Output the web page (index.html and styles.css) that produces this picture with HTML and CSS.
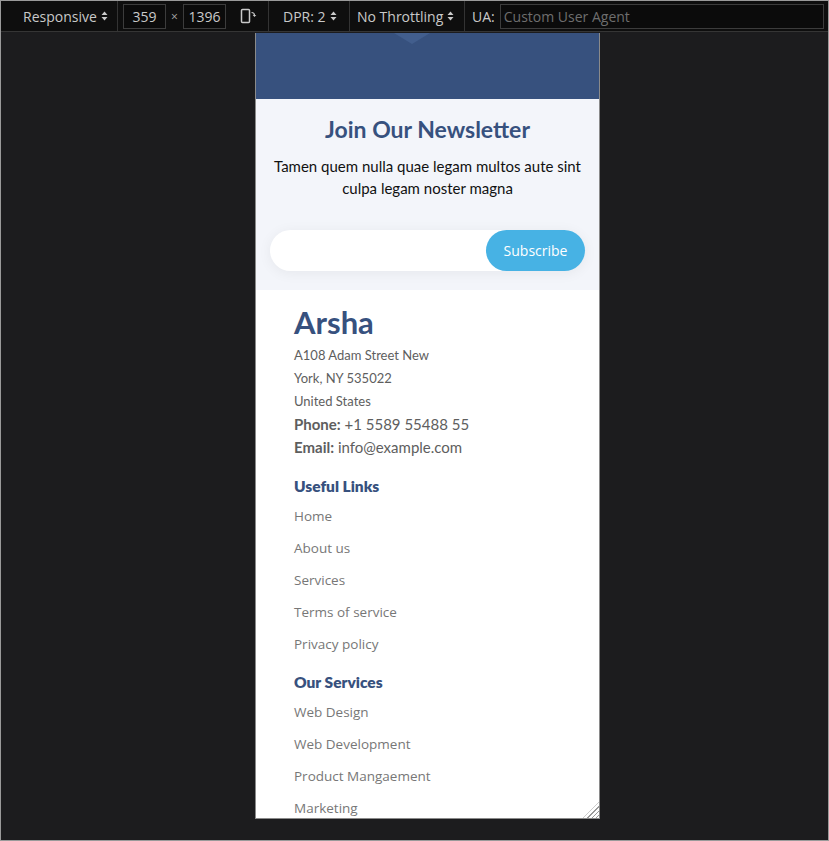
FILE: index.html
```html
<!DOCTYPE html>
<html>
<head>
<meta charset="utf-8">
<link rel="stylesheet" href="styles.css">
</head>
<body>
<div class="screen">
  <div class="toolbar">
    <div class="tb-item resp">Responsive <svg class="arrows" width="7" height="10" viewBox="0 0 7 10"><path d="M0.5 4 L3.5 0.5 L6.5 4 Z M0.5 6 L3.5 9.5 L6.5 6 Z" fill="#c9c9c9"/></svg></div>
    <div class="sep"></div>
    <div class="tb-item dims">
      <span class="box">359</span>
      <span class="times">×</span>
      <span class="box">1396</span>
      <svg class="rotate" width="18" height="18" viewBox="0 0 18 18"><rect x="2.5" y="2.5" width="8" height="13" rx="1" fill="none" stroke="#c9c9c9" stroke-width="1.5"/><path d="M12.5 5.5 q3 0 3 3" fill="none" stroke="#c9c9c9" stroke-width="1.2"/><path d="M13.7 8 l1.8 2 l1.8 -2 z" fill="#c9c9c9"/></svg>
    </div>
    <div class="sep"></div>
    <div class="tb-item dpr">DPR: 2 <svg class="arrows" width="7" height="10" viewBox="0 0 7 10"><path d="M0.5 4 L3.5 0.5 L6.5 4 Z M0.5 6 L3.5 9.5 L6.5 6 Z" fill="#c9c9c9"/></svg></div>
    <div class="sep"></div>
    <div class="tb-item thr">No Throttling <svg class="arrows" width="7" height="10" viewBox="0 0 7 10"><path d="M0.5 4 L3.5 0.5 L6.5 4 Z M0.5 6 L3.5 9.5 L6.5 6 Z" fill="#c9c9c9"/></svg></div>
    <div class="sep"></div>
    <div class="tb-item ua">UA: <span class="ua-input">Custom User Agent</span></div>
  </div>
  <div class="stage">
    <div class="device">
      <section class="hero-end"><div class="tip"></div></section>
      <section class="newsletter">
        <h4>Join Our Newsletter</h4>
        <p>Tamen quem nulla quae legam multos aute sint culpa legam noster magna</p>
        <form class="nl-form">
          <span class="nl-input"></span>
          <span class="nl-btn">Subscribe</span>
        </form>
      </section>
      <section class="footer">
        <h3>Arsha</h3>
        <p class="addr">A108 Adam Street New<br>York, NY 535022<br>United States</p>
        <p class="contact"><strong>Phone:</strong> +1 5589 55488 55<br><strong>Email:</strong> info@example.com</p>
        <h4 class="first">Useful Links</h4>
        <ul>
          <li>Home</li>
          <li>About us</li>
          <li>Services</li>
          <li>Terms of service</li>
          <li>Privacy policy</li>
        </ul>
        <h4>Our Services</h4>
        <ul>
          <li>Web Design</li>
          <li>Web Development</li>
          <li>Product Mangaement</li>
          <li>Marketing</li>
        </ul>
      </section>
      <div class="resize"></div>
    </div>
  </div>
</div>
</body>
</html>
```

FILE: styles.css
```css
* { box-sizing: border-box; }
html, body { margin: 0; padding: 0; }
body {
  width: 829px;
  height: 841px;
  overflow: hidden;
  background: #1c1c1e;
  font-family: "Open Sans", "Noto Sans", sans-serif;
}
.screen {
  width: 829px;
  height: 841px;
  border: 1px solid #9a9a9a;
  background: #1c1c1e;
  display: flex;
  flex-direction: column;
}
.toolbar {
  height: 31px;
  background: #0e0e0e;
  border-bottom: 1px solid #353535;
  display: flex;
  align-items: stretch;
  color: #c9c9c9;
  font-size: 14px;
  padding-left: 22px;
  flex-shrink: 0;
}
.tb-item {
  display: flex;
  align-items: center;
  white-space: nowrap;
}
.arrows { margin-left: 4px; }
.sep {
  width: 1px;
  background: #333;
}
.resp { width: 94px; }
.dims { width: 150px; padding-left: 5px; }
.dpr { width: 80px; padding-left: 14px; }
.thr { width: 114px; padding-left: 7px; }
.box {
  border: 1px solid #3c3c3c;
  width: 43px;
  height: 25px;
  display: flex;
  align-items: center;
  justify-content: center;
  background: #0b0b0b;
}
.times { width: 17px; text-align: center; font-size: 12px; color: #aaa; }
.rotate { margin-left: 13px; }
.ua { padding-left: 7px; flex: 1; }
.ua-input {
  margin-left: 5px;
  flex: 1;
  height: 25px;
  border: 1px solid #3c3c3c;
  background: #0b0b0b;
  color: #6e6e6e;
  display: flex;
  align-items: center;
  padding-left: 3px;
  margin-right: 4px;
}
.stage {
  flex: 1;
  padding-left: 254px;
  padding-top: 1px;
}
.device {
  position: relative;
  width: 345px;
  height: 786px;
  border: 1px solid #8a8a8a;
  border-top: none;
  background: #fff;
  overflow: hidden;
}
.hero-end {
  height: 66px;
  background: #37517e;
  position: relative;
}
.tip {
  position: absolute;
  left: 138px;
  top: 0;
  width: 0;
  height: 0;
  border-left: 18px solid transparent;
  border-right: 18px solid transparent;
  border-top: 11px solid #425e8d;
}
.newsletter {
  background: #f3f5fa;
  padding: 16px 8px 19px 8px;
  text-align: center;
  font-family: "Lato", sans-serif;
}
.newsletter h4 {
  margin: 0;
  color: #37517e;
  font-size: 23px;
  font-weight: 700;
  line-height: 28px;
}
.newsletter p {
  margin: 12px 0 0 0;
  font-size: 15px;
  line-height: 22px;
  color: #111;
}
.nl-form {
  margin: 31px 6px 0 6px;
  height: 41px;
  background: #fff;
  border-radius: 50px;
  box-shadow: 0 2px 14px rgba(0,0,0,0.06);
  display: flex;
  justify-content: space-between;
}
.nl-btn {
  width: 99px;
  background: #47b2e4;
  color: #fff;
  border-radius: 50px;
  display: flex;
  align-items: center;
  justify-content: center;
  font-family: "Open Sans", sans-serif;
  font-size: 14px;
}
.footer {
  padding: 13px 20px 0 38px;
  color: #5e5e5e;
  font-family: "Lato", sans-serif;
}
.footer h3 {
  margin: 0;
  font-size: 31px;
  line-height: 38px;
  font-weight: 700;
  color: #37517e;
}
.addr {
  margin: 3px 0 0 0;
  font-size: 13px;
  line-height: 23px;
  color: #5e5e5e;
}
.contact {
  margin: 0;
  font-size: 15px;
  line-height: 23px;
}
.contact strong { color: #5e5e5e; }
.footer h4 {
  margin: 11px 0 0 0;
  font-size: 15.5px;
  line-height: 22px;
  font-weight: 800;
  color: #37517e;
}
.footer h4.first { margin-top: 16px; }
.footer ul {
  list-style: none;
  margin: 3px 0 0 0;
  padding: 0;
  font-family: "Open Sans", sans-serif;
  font-size: 13.5px;
  color: #777;
}
.footer li {
  line-height: 22px;
  padding: 5px 0;
}
.resize {
  position: absolute;
  right: 0;
  bottom: 0;
  width: 16px;
  height: 16px;
  background: repeating-linear-gradient(135deg, transparent 0 2px, #9a9a9a 2px 3px);
  clip-path: polygon(100% 0, 100% 100%, 0 100%);
}
```
